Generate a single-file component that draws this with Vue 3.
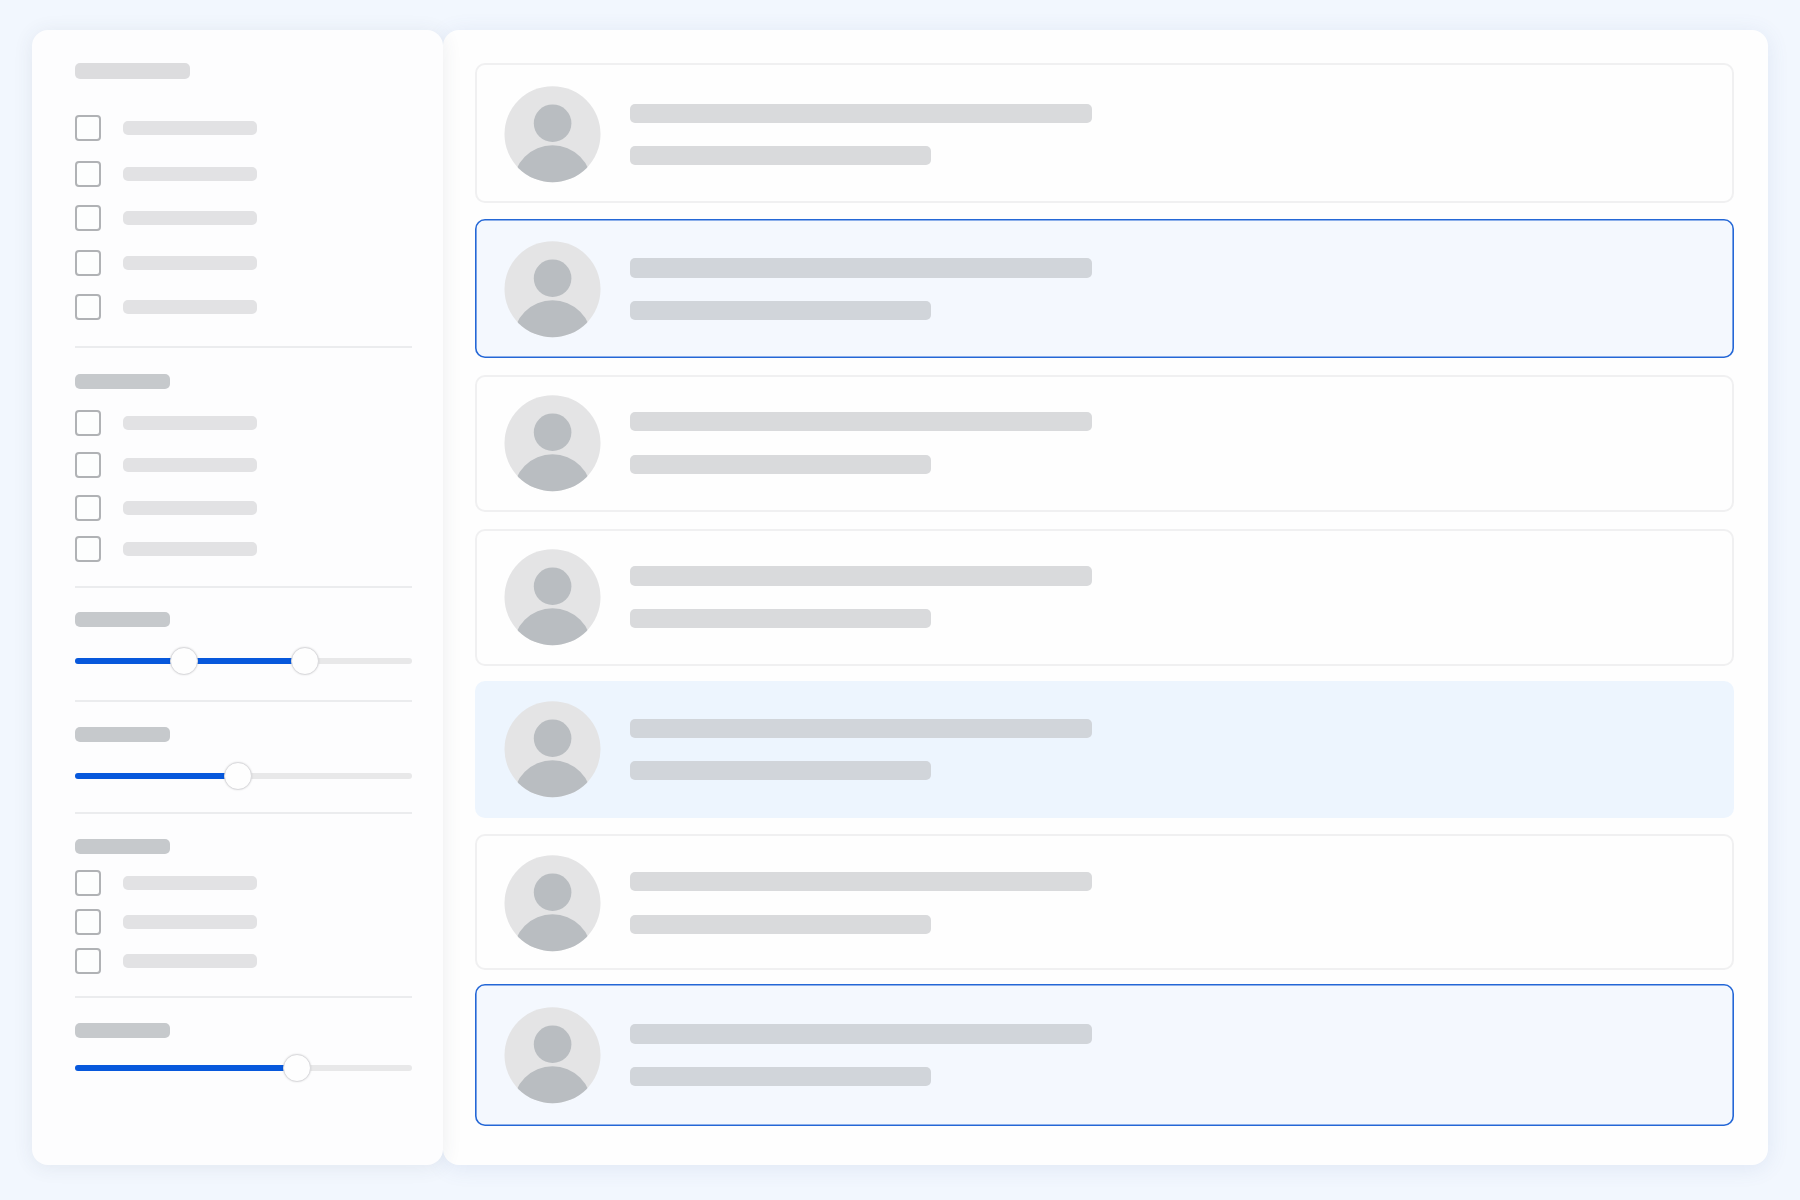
<template>
	<div class="page">
		<aside class="sidebar">
			<section
				v-for="(section, i) in sections"
				:key="i"
				class="section"
				:style="{ height: section.height + 'px' }"
			>
				<div
					class="heading"
					:class="{ main: i == 0 }"
					:style="{ marginTop: section.top + 'px' }"
				></div>
				<div
					v-for="(gap, j) in section.rows"
					:key="j"
					class="option"
					:style="{ marginTop: gap + 'px' }"
				>
					<span class="checkbox"></span>
					<span class="label"></span>
				</div>
				<div
					v-if="section.knobs"
					class="slider"
					:style="{ marginTop: section.sliderGap + 'px' }"
				>
					<div class="track">
						<div class="fill" :style="{ width: fillWidth(section) + 'px' }"></div>
					</div>
					<span
						v-for="knob in section.knobs"
						:key="knob"
						class="knob"
						:style="{ left: knob + 'px' }"
					></span>
				</div>
			</section>
		</aside>

		<main class="content">
			<article
				v-for="(card, i) in cards"
				:key="i"
				class="card"
				:class="card.state"
				:style="{ height: card.height + 'px', marginTop: card.gap + 'px' }"
			>
				<svg
					class="avatar"
					viewBox="0 0 97 97"
					:style="{ marginTop: card.avatar + 'px' }"
				>
					<defs>
						<clipPath :id="'avatar-' + i">
							<circle cx="48.5" cy="48.2" r="48" />
						</clipPath>
					</defs>
					<circle class="avatar-bg" cx="48.5" cy="48.2" r="48" />
					<circle class="avatar-fg" cx="48.6" cy="37.2" r="18.8" />
					<circle
						class="avatar-fg"
						cx="48.5"
						cy="98.5"
						r="39.2"
						:clip-path="`url(#avatar-${i})`"
					/>
				</svg>
				<div class="lines" :style="{ marginTop: card.lines[0] + 'px' }">
					<div class="line long" :style="{ height: card.lines[1] + 'px' }"></div>
					<div class="line short" :style="{ marginTop: card.lines[2] + 'px' }"></div>
				</div>
			</article>
		</main>
	</div>
</template>

<script setup>
	// heights include the divider under each section
	const sections = [
		{ top: 33, height: 318, rows: [36, 20, 18, 19, 18] },
		{ top: 26, height: 240, rows: [21, 16, 17, 15] },
		{ top: 24, height: 114, knobs: [109, 230], sliderGap: 20 },
		{ top: 25, height: 112, knobs: [163], sliderGap: 20 },
		{ top: 25, height: 184, rows: [16, 13, 13] },
		{ top: 25, height: 120, knobs: [222], sliderGap: 16 },
	];

	// lines: top offset, height of the first line, space before the second
	const cards = [
		{ gap: 33, height: 140, avatar: 22.5, lines: [41, 19, 23] },
		{ gap: 16, height: 139, avatar: 21.5, lines: [39, 20, 23], state: "selected" },
		{ gap: 17, height: 137, avatar: 20, lines: [37, 19, 24] },
		{ gap: 17, height: 137, avatar: 20, lines: [37, 20, 23] },
		{ gap: 15, height: 137, avatar: 20, lines: [38, 19, 23], state: "hovered" },
		{ gap: 16, height: 136, avatar: 20.5, lines: [38, 19, 24] },
		{ gap: 14, height: 142, avatar: 22.5, lines: [40, 20, 23], state: "selected" },
	];

	const fillWidth = (section) => Math.max(...section.knobs);
</script>

<style>
	body {
		margin: 0;
		background: #f2f7fe;
	}
</style>

<style scoped>
	.page {
		display: flex;
		width: 1800px;
		height: 1200px;
		padding: 30px 32px 35px;
		box-sizing: border-box;
		overflow: hidden;
	}

	.sidebar,
	.content {
		box-sizing: border-box;
		border-radius: 16px;
		background: #fdfdfe;
		box-shadow: 0 3px 22px rgba(70, 100, 160, 0.11);
	}

	.sidebar {
		position: relative;
		z-index: 1;
		width: 411px;
		padding: 0 31px 0 43px;
		box-shadow: 0 2px 20px rgba(60, 65, 90, 0.09);
	}

	.content {
		flex: 1;
		display: flex;
		flex-direction: column;
		padding: 0 34px 0 32px;
		background: #fefefe;
	}

	.section {
		display: flex;
		flex-direction: column;
		box-sizing: border-box;
		border-bottom: 2px solid #ebecee;
	}

	.section:last-child {
		border-bottom: none;
	}

	.heading {
		flex: none;
		width: 95px;
		height: 15px;
		border-radius: 5px;
		background: #c6c9cc;
	}

	.heading.main {
		width: 115px;
		height: 16px;
		background: #dcdcde;
	}

	.option {
		display: flex;
		align-items: center;
		gap: 22px;
		height: 26px;
	}

	.checkbox {
		width: 26px;
		height: 26px;
		box-sizing: border-box;
		border: 2px solid #b0b2b5;
		border-radius: 4px;
		background: #fdfefe;
	}

	.label {
		width: 134px;
		height: 14px;
		border-radius: 5px;
		background: #e2e2e4;
	}

	.slider {
		position: relative;
		display: flex;
		align-items: center;
		flex: none;
		height: 28px;
	}

	.track {
		width: 100%;
		height: 6px;
		border-radius: 3px;
		background: #e8e8e9;
		overflow: hidden;
	}

	.fill {
		height: 100%;
		background: #0758dc;
	}

	.knob {
		position: absolute;
		top: 0;
		width: 28px;
		height: 28px;
		margin-left: -14px;
		box-sizing: border-box;
		border: 1.5px solid #dadadd;
		border-radius: 50%;
		background: #fefefe;
		box-shadow: 0 0 2px rgba(0, 0, 0, 0.12);
	}

	.card {
		display: flex;
		align-items: flex-start;
		flex: none;
		box-sizing: border-box;
		padding-left: 29px;
		border-radius: 10px;
		box-shadow: inset 0 0 0 2px #f0f0f1;
	}

	.card.selected {
		background: #f4f8fe;
		box-shadow: inset 0 0 0 1.6px #2467d6;
	}

	.card.hovered {
		background: #edf5fe;
		box-shadow: none;
	}

	.avatar {
		flex: none;
		width: 97px;
		height: 97px;
	}

	.avatar-bg {
		fill: #e4e4e5;
	}

	.avatar-fg {
		fill: #b9bdc1;
	}

	.lines {
		margin-left: 29px;
	}

	.line {
		height: 19px;
		border-radius: 5px;
		background: #d9dadc;
	}

	.selected .line,
	.hovered .line {
		background: #d1d5da;
	}

	.long {
		width: 462px;
	}

	.short {
		width: 301px;
	}
</style>
